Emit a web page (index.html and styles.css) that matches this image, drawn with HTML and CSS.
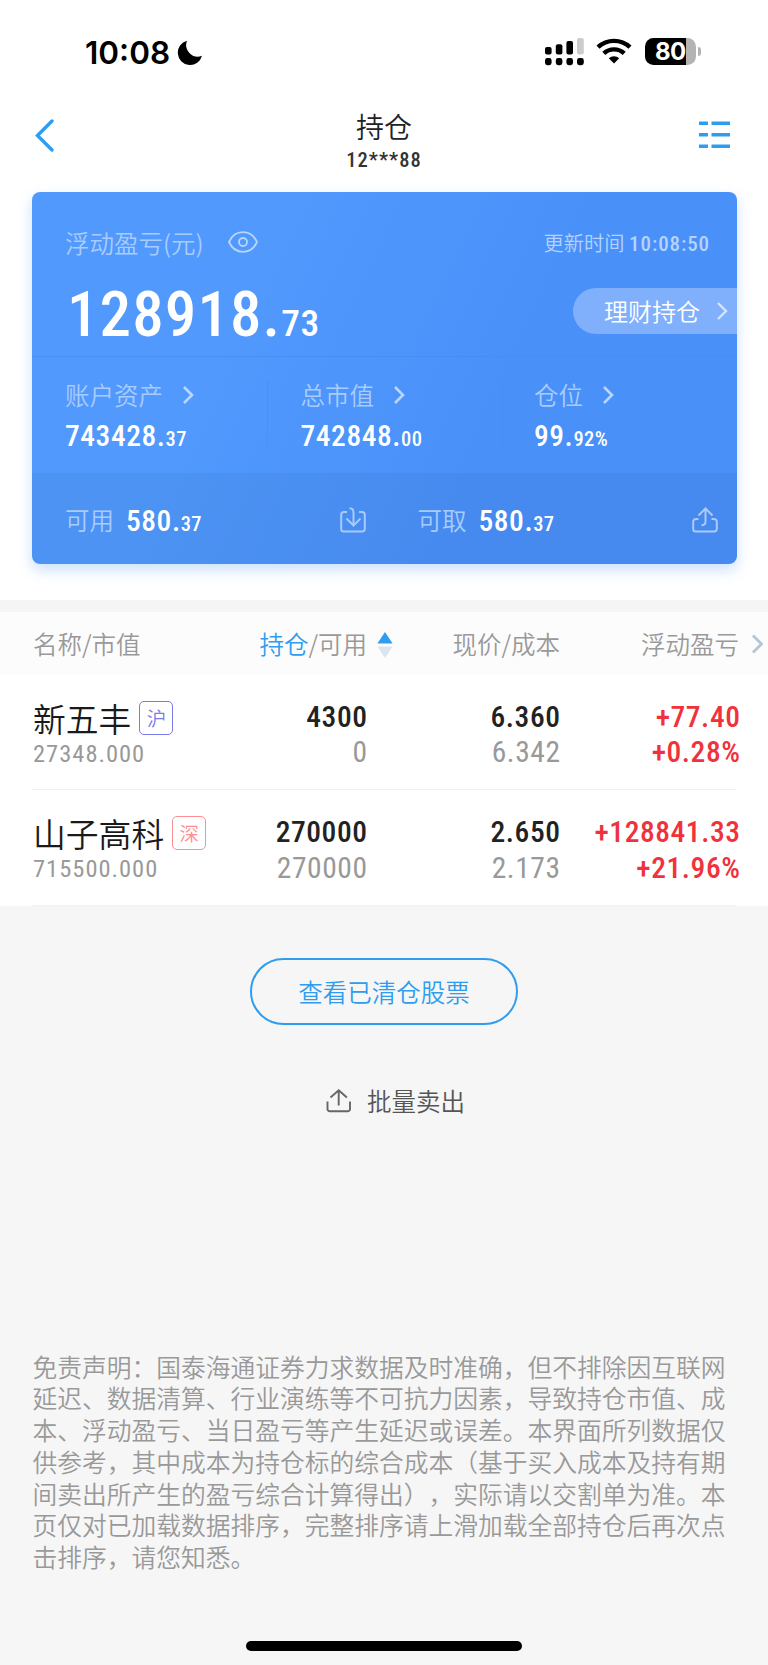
FILE: index.html
```html
<!doctype html>
<html lang="zh-CN">
<head>
	<meta charset="UTF-8" />
	<title>持仓</title>
	<link rel="stylesheet" href="styles.css">
</head>
<body>
	<!--状态栏-->
	<div class="status">
		<span class="time">10:08</span>
		<svg class="moon" width="26" height="26" viewBox="0 0 26 26"><path d="M10 .8A12.3 12.3 0 1 0 25 15.8 11.6 11.6 0 0 1 10 .8z"/></svg>
		<svg class="signal" width="39" height="28" viewBox="0 0 39 28">
			<rect x="0" y="9" width="6.6" height="7.5" rx="2"/>
			<rect x="10.8" y="6.2" width="6.6" height="10.3" rx="2"/>
			<rect x="21.4" y="3" width="6.6" height="13.5" rx="2"/>
			<rect x="32" y="0" width="6.8" height="16.5" rx="2" fill="#ccc"/>
			<rect x="0" y="20" width="6.6" height="7.2" rx="2.4"/>
			<rect x="10.8" y="20" width="6.6" height="7.2" rx="2.4"/>
			<rect x="21.4" y="20" width="6.6" height="7.2" rx="2.4"/>
			<rect x="32" y="20" width="6.8" height="7.2" rx="2.4"/>
		</svg>
		<svg class="wifi" width="36" height="26" viewBox="0 0 36 26">
			<path d="M2 9.2a23.5 23.5 0 0 1 32 0" fill="none" stroke="#000" stroke-width="4.4"/>
			<path d="M7.8 15.4a15 15 0 0 1 20.4 0" fill="none" stroke="#000" stroke-width="4.4"/>
			<path d="M18 25.6l-5.2-5.3a7.6 7.6 0 0 1 10.4 0z"/>
		</svg>
		<div class="battery"><span>80</span></div>
		<i class="battery-cap"></i>
	</div>

	<!--标题-->
	<div class="header">
		<svg width="20" height="34" viewBox="0 0 20 34"><path d="M17 2L2.5 16.5 17 31" fill="none" stroke="#2e9def" stroke-width="3.4" stroke-linecap="round"/></svg>
		<div class="title">
			<h1>持仓</h1>
			<p class="num">12***88</p>
		</div>
		<svg width="31" height="28" viewBox="0 0 31 28"><path d="M0 2.2h9m3.5 0H31M0 13.7h9m3.5 0H31M0 25.3h9m3.5 0H31" stroke="#2e9def" stroke-width="3.4"/></svg>
	</div>

	<!--资产卡片-->
	<div class="card-wrap">
	<div class="card">
		<div class="profit">
			<div class="profit-top">
				<span class="label">浮动盈亏(元)</span>
				<svg class="eye" width="30" height="22" viewBox="0 0 30 22"><g fill="none" stroke="#b9d6fe" stroke-width="1.8"><path d="M1 11C4 4.5 9 1.2 15 1.2S26 4.5 29 11c-3 6.5-8 9.8-14 9.8S4 17.5 1 11z" stroke-linejoin="round"/><circle cx="15" cy="11" r="4"/></g></svg>
				<span class="update">更新时间 <span class="num">10:08:50</span></span>
			</div>
			<div class="profit-main">
				<div class="total num">128918.<small>73</small></div>
				<a class="pill">理财持仓<svg width="12" height="20" viewBox="0 0 12 20"><path d="M2 2l8 8-8 8" fill="none" stroke="#d5e5fe" stroke-width="2.4"/></svg></a>
			</div>
		</div>
		<div class="assets">
			<div class="asset">
				<p class="label">账户资产<svg width="12" height="20" viewBox="0 0 12 20"><path d="M2 2l8 8-8 8" fill="none" stroke="#b9d6fe" stroke-width="2.6"/></svg></p>
				<p class="val num">743428.<small>37</small></p>
			</div>
			<div class="asset">
				<p class="label">总市值<svg width="12" height="20" viewBox="0 0 12 20"><path d="M2 2l8 8-8 8" fill="none" stroke="#b9d6fe" stroke-width="2.6"/></svg></p>
				<p class="val num">742848.<small>00</small></p>
			</div>
			<div class="asset">
				<p class="label">仓位<svg width="12" height="20" viewBox="0 0 12 20"><path d="M2 2l8 8-8 8" fill="none" stroke="#b9d6fe" stroke-width="2.6"/></svg></p>
				<p class="val num">99.<small>92%</small></p>
			</div>
		</div>
		<div class="cash">
			<div class="cash-item">
				<span class="label">可用</span>
				<span class="val num">580.<small>37</small></span>
				<svg width="26" height="26" viewBox="0 0 26 26"><path d="M7 5H4a2.8 2.8 0 0 0-2.8 2.8V22A2.5 2.5 0 0 0 3.7 24.5h18.6a2.5 2.5 0 0 0 2.5-2.5V7.8A2.8 2.8 0 0 0 22 5h-3M9.5 1.2c3 0 4 1.3 4 4V18M6.5 11.5l7 7 7-7" fill="none" stroke="#a9cafa" stroke-width="2"/></svg>
			</div>
			<div class="cash-item">
				<span class="label">可取</span>
				<span class="val num">580.<small>37</small></span>
				<svg width="26" height="26" viewBox="0 0 26 26"><path d="M6.5 12H4a2.8 2.8 0 0 0-2.8 2.8V22A2.5 2.5 0 0 0 3.7 24.5h18.6a2.5 2.5 0 0 0 2.5-2.5v-7.2A2.8 2.8 0 0 0 22 12h-2.5M6.5 8.5l7-7 7 7M13.5 2v12.5c0 2.6-1.2 3.8-4 3.8" fill="none" stroke="#a9cafa" stroke-width="2"/></svg>
			</div>
		</div>
	</div>
	</div>

	<!--持仓列表-->
	<div class="list">
		<div class="row thead">
			<div class="c1">名称/市值</div>
			<div class="c2"><b>持仓</b>/可用</div>
			<svg class="sort" width="16" height="28" viewBox="0 0 16 28"><path d="M8 1l7.6 11.5H.4z" fill="#2e9def"/><path d="M8 27l7.6-11.5H.4z" fill="#dce5ee"/></svg>
			<div class="c3">现价/成本</div>
			<div class="c4">浮动盈亏</div>
			<svg class="more" width="13" height="20" viewBox="0 0 13 20"><path d="M2 1.5l8.5 8.5L2 18.5" fill="none" stroke="#b4c5d8" stroke-width="2.8"/></svg>
		</div>
		<div class="row">
			<div class="c1">
				<p class="name">新五丰<i class="tag sh">沪</i></p>
				<p class="worth num">27348.000</p>
			</div>
			<div class="c2 num"><p>4300</p><p class="sub">0</p></div>
			<div class="c3 num"><p>6.360</p><p class="sub">6.342</p></div>
			<div class="c4 num red"><p>+77.40</p><p>+0.28%</p></div>
		</div>
		<div class="row">
			<div class="c1">
				<p class="name">山子高科<i class="tag sz">深</i></p>
				<p class="worth num">715500.000</p>
			</div>
			<div class="c2 num"><p>270000</p><p class="sub">270000</p></div>
			<div class="c3 num"><p>2.650</p><p class="sub">2.173</p></div>
			<div class="c4 num red"><p>+128841.33</p><p>+21.96%</p></div>
		</div>
	</div>

	<a class="cleared">查看已清仓股票</a>
	<a class="batch"><svg width="26" height="24" viewBox="0 0 26 24"><path d="M1.5 12.5V20a2.2 2.2 0 0 0 2.2 2.2h18A2.2 2.2 0 0 0 24 20v-7.5M4.5 8.5L12.7 1.3l8.2 7.2M12.7 1.5V16.5" fill="none" stroke="#666" stroke-width="1.9"/></svg>批量卖出</a>

	<!--免责声明-->
	<p class="notice">免责声明：国泰海通证券力求数据及时准确，但不排除因互联网<br>延迟、数据清算、行业演练等不可抗力因素，导致持仓市值、成<br>本、浮动盈亏、当日盈亏等产生延迟或误差。本界面所列数据仅<br>供参考，其中成本为持仓标的综合成本（基于买入成本及持有期<br>间卖出所产生的盈亏综合计算得出），实际请以交割单为准。本<br>页仅对已加载数据排序，完整排序请上滑加载全部持仓后再次点<br>击排序，请您知悉。</p>
	<div class="home"></div>
</body>
</html>
```
FILE: styles.css
```css
*{
	padding: 0;
	margin: 0;
	box-sizing: border-box;
}
body{
	width: 768px;
	height: 1665px;
	overflow: hidden;
	background: #f6f6f6;
	font-family: "Noto Sans CJK SC", sans-serif;
	font-weight: 350;
	font-size: 24.5px;
	color: #222;
	display: flex;
	flex-direction: column;
}
svg{
	display: block;
	flex: none;
}
i{
	font-style: normal;
}
.num{
	font-family: Roboto, "Noto Sans CJK SC", sans-serif;
	font-weight: 500;
	font-stretch: 75%;
	white-space: nowrap;
}

/*状态栏*/
.status{
	height: 100px;
	flex: none;
	background: #fff;
	display: flex;
	padding: 38px 67px 0 85px;
}
.time{
	font: 600 31.5px/29px Inter, sans-serif;
	color: #000;
	width: 86px;
	white-space: nowrap;
}
.moon{
	margin: 2px 0 0 6px;
}
.signal{
	margin-left: auto;
}
.wifi{
	margin: 0 13px 0 12px;
}
.battery{
	width: 51px;
	height: 27px;
	border-radius: 8.5px;
	background: linear-gradient(90deg, #000 41px, #b3b3b3 41px);
	color: #fff;
	font: 700 24px/27px Inter, sans-serif;
	padding-left: 10px;
	letter-spacing: -.5px;
}
.battery-cap{
	width: 3px;
	height: 9px;
	margin: 9px 0 0 2px;
	border-radius: 0 5px 5px 0;
	background: #b3b3b3;
}

/*标题*/
.header{
	height: 92px;
	flex: none;
	background: #fff;
	display: flex;
	justify-content: space-between;
	padding: 7px 38px 0 35px;
}
.header > svg{
	margin-top: 12px;
}
.header > svg:last-child{
	margin-top: 14px;
}
.title{
	text-align: center;
	padding-left: 14px;
}
.title h1{
	font-size: 28px;
	line-height: 38px;
	font-weight: 350;
}
.title .num{
	font-size: 20.5px;
	line-height: 28px;
	margin-top: 1px;
	letter-spacing: 1px;
	color: #333;
}

/*资产卡片*/
.card-wrap{
	height: 408px;
	flex: none;
	background: #fff;
	padding: 0 31px 0 32px;
}
.card{
	height: 372px;
	border-radius: 8px;
	background: linear-gradient(115deg, #5199fd 30%, #4990f9 65%);
	box-shadow: 0 6px 14px rgba(73,144,249,.28);
	overflow: hidden;
	color: #fff;
}
.profit{
	height: 165px;
	border-bottom: 1px solid #468eef;
	padding-top: 32px;
}
.label{
	color: #a9ccfe;
	font-size: 24.5px;
}
.profit-top{
	display: flex;
	align-items: center;
	height: 36px;
	padding: 0 27px 0 33px;
}
.eye{
	margin-left: 24px;
}
.update{
	margin-left: auto;
	font-size: 20.3px;
	color: #b6d3fd;
	white-space: nowrap;
}
.update .num{
	font-size: 21px;
	letter-spacing: .9px;
}
.profit-main{
	display: flex;
	justify-content: space-between;
	padding-left: 35px;
}
.total{
	font-size: 63px;
	line-height: 66px;
	height: 66px;
	margin-top: 22px;
	letter-spacing: 1.1px;
}
.total small{
	font-size: 37.5px;
	letter-spacing: .5px;
}
.pill{
	width: 164px;
	height: 46px;
	margin-top: 28px;
	border-radius: 23px 0 0 23px;
	background: #80b0fb;
	display: flex;
	align-items: center;
	justify-content: space-between;
	padding: 0 9px 1px 31px;
	font-size: 24px;
}
.assets{
	height: 116px;
	display: grid;
	grid-template-columns: 235.5px 235.5px 1fr;
	padding-top: 24px;
}
.asset{
	height: 67px;
	padding-left: 33px;
	border-right: 1px dotted #468bea;
}
.asset:last-child{
	border: 0;
	padding-left: 31px;
}
.asset .label{
	display: flex;
	align-items: center;
	line-height: 27px;
	height: 27px;
}
.asset svg{
	margin-left: 19px;
}
.val{
	font-size: 29.5px;
	line-height: 36px;
	letter-spacing: .55px;
}
.asset .val{
	margin-top: 10px;
}
.val small{
	font-size: 20.5px;
	letter-spacing: .4px;
}
.cash{
	height: 91px;
	display: grid;
	grid-template-columns: 1fr 1fr;
	background: rgba(0,0,0,.04);
}
.cash-item{
	display: flex;
	align-items: center;
	padding: 2px 19px 0 33px;
}
.cash-item .val{
	margin-left: 12px;
	padding-top: 5px;
}
.cash-item svg{
	margin-left: auto;
}

/*列表*/
.list{
	flex: none;
	border-top: 12px solid #f5f5f5;
	background: #fff;
}
.row{
	height: 115.5px;
	padding: 0 28px 0 33px;
	display: grid;
	grid-template-columns: 180px 154px 193px 180px;
	position: relative;
}
.row:not(.thead)::after{
	content: "";
	position: absolute;
	left: 32px;
	right: 31px;
	bottom: 0;
	height: 1px;
	background: #f1f1f1;
}
.thead{
	height: 62.5px;
	background: #fcfcfc;
	color: #999;
	line-height: 63px;
	display: flex;
	padding-right: 4px;
}
.c2, .c3, .c4{
	text-align: right;
}
.thead .c1{
	width: 180px;
}
.thead .c2{
	width: 154px;
}
.thead .c3{
	width: 167px;
}
.thead .c4{
	width: 179px;
}
.thead b{
	font-weight: 350;
	color: #2e9def;
}
.sort{
	margin: 19px 0 0 10px;
}
.more{
	margin: 22px 0 0 12px;
}
.row:not(.thead) .c2, .row:not(.thead) .c3, .row:not(.thead) .c4{
	font-size: 29.5px;
	line-height: 35.5px;
	padding-top: 25px;
	margin-right: -.5px;
	letter-spacing: .55px;
}
.name{
	display: flex;
	align-items: center;
	white-space: nowrap;
	font-size: 32.8px;
	line-height: 32px;
	height: 34px;
	margin-top: 26px;
	color: #1a1a1a;
}
.worth{
	font-size: 24.5px;
	line-height: 30px;
	margin-top: 4px;
	letter-spacing: 1px;
}
.tag{
	width: 34px;
	height: 34px;
	margin-left: 8px;
	border: 1px solid;
	border-radius: 5px;
	font-size: 19.5px;
	line-height: 31px;
	text-align: center;
}
.sh{
	color: #7b7bea;
}
.sz{
	color: #ff8d94;
}
.worth, .sub{
	color: #999;
}
.num.worth, .sub{
	font-weight: 450;
}
.red{
	color: #f0323c;
}

/*按钮*/
.cleared{
	flex: none;
	align-self: center;
	width: 268px;
	height: 67px;
	margin-top: 52px;
	border: 2px solid #2e9def;
	border-radius: 34px;
	color: #2e9def;
	text-align: center;
	line-height: 63px;
}
.batch{
	flex: none;
	height: 36px;
	margin: 58px 0 0 326px;
	display: flex;
	align-items: center;
	gap: 15px;
	color: #555;
}

.notice{
	flex: none;
	margin: 232px 0 0 32.5px;
	font-size: 24.75px;
	line-height: 31.75px;
	color: #999;
	white-space: nowrap;
	text-spacing-trim: space-all;
}
.home{
	flex: none;
	align-self: center;
	width: 276px;
	height: 10px;
	margin-top: 68px;
	border-radius: 5px;
	background: #000;
}
```
